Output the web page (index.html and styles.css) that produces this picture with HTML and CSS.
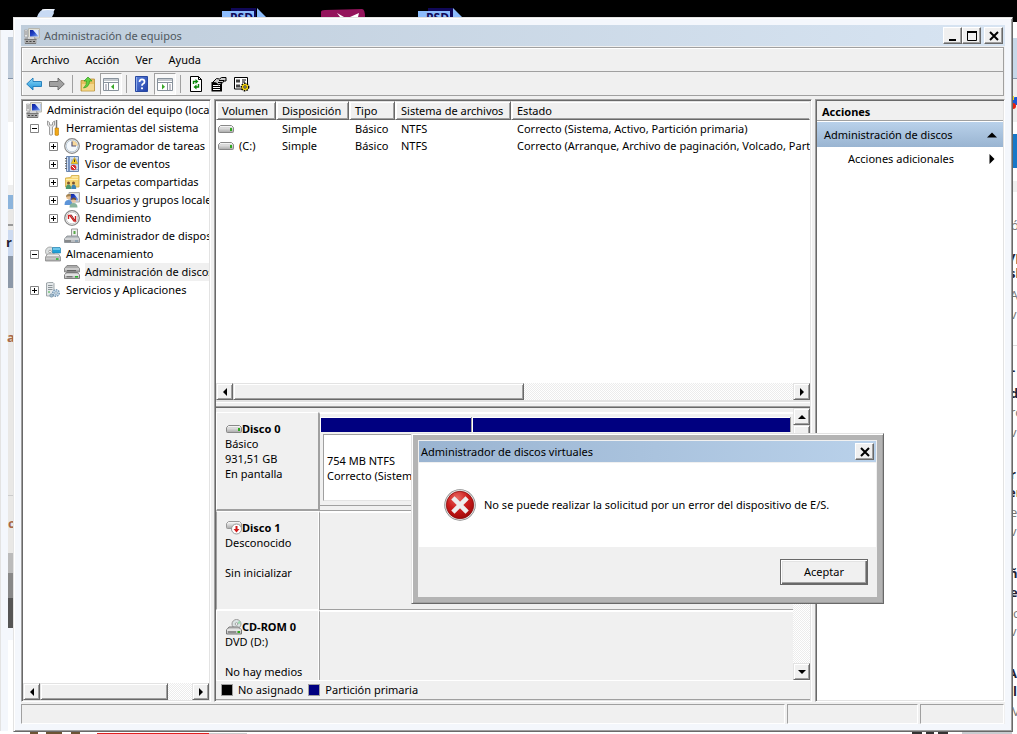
FILE: index.html
```html
<!DOCTYPE html>
<html lang="es">
<head>
<meta charset="utf-8">
<title>Administración de equipos</title>
<link rel="stylesheet" href="styles.css">
</head>
<body>
<svg class="defs" aria-hidden="true">
  <defs>
    <linearGradient id="gBlue" x1="0" y1="0" x2="1" y2="1"><stop offset="0" stop-color="#0a1e9c"/><stop offset=".5" stop-color="#2446c8"/><stop offset="1" stop-color="#8fb4f4"/></linearGradient>
    <linearGradient id="gArrow" x1="0" y1="0" x2="0" y2="1"><stop offset="0" stop-color="#8fdcfa"/><stop offset="1" stop-color="#1c8fd6"/></linearGradient>
    <linearGradient id="gDrive" x1="0" y1="0" x2="0" y2="1"><stop offset="0" stop-color="#fff"/><stop offset="1" stop-color="#a8a8a8"/></linearGradient>
    <linearGradient id="gHelp" x1="0" y1="0" x2="1" y2="1"><stop offset="0" stop-color="#5c82dc"/><stop offset="1" stop-color="#1f3fa8"/></linearGradient>
    <radialGradient id="gErr" cx=".4" cy=".25" r=".8"><stop offset="0" stop-color="#e86a62"/><stop offset=".5" stop-color="#cc1c1c"/><stop offset="1" stop-color="#9c0808"/></radialGradient>
    <symbol id="computer" viewBox="0 0 16 16">
      <path d="M4.500.5h11v9.500h-11z" fill="#e0e0d8" stroke="#b8b8b0"/>
      <path d="M6 2h8.500v6.500H6z" fill="url(#gBlue)"/><path d="M9 2h5.500v6.500z" fill="#dce8fc"/>
      <path d="M.5 2h3v7h-3z" fill="#e4e4e4" stroke="#999" stroke-width=".6"/><path d="M1 4h2M1 6h2" stroke="#888"/>
      <path d="M.5 10l3-1h7l2 2v4.500H.5z" fill="#a8a8a8"/><path d="M.5 11.500h12" stroke="#777"/><path d="M1 15.500h11" stroke="#777"/><path d="M2 13.500h2M5.500 13.500h2M9 13.500h2" stroke="#444"/><path d="M4 10h6" stroke="#fff"/>
    </symbol>
    <symbol id="tools" viewBox="0 0 16 16">
      <path d="M2.500 1v4l2 2v7.500q1.500 1.500 3 0V7l2-2V1L7.500 2.500V5h-3V2.500z" fill="#e8e8e8" stroke="#888" stroke-width=".8"/>
      <path d="M11.500 0v8" stroke="#777" stroke-width="1.500"/><path d="M10 8h3.500v7q-1.700 1-3.500 0z" fill="#f0a818" stroke="#b87808" stroke-width=".6"/>
    </symbol>
    <symbol id="clock" viewBox="0 0 16 16">
      <circle cx="8" cy="8" r="7.300" fill="#f4f8fc" stroke="#888" stroke-width="1.200"/><circle cx="8" cy="8" r="5.800" fill="none" stroke="#bccbd8"/>
      <path d="M8 8V2.500A5.500 5.500 0 0 1 13.500 8z" fill="#f8d89c"/><path d="M8 3.500V8h4" fill="none" stroke="#557" stroke-width="1.200"/>
    </symbol>
    <symbol id="events" viewBox="0 0 16 16">
      <path d="M2.500.5h12v15h-12z" fill="#ccdcf2" stroke="#6a86b0"/><path d="M4 1h2v14H4z" fill="#7894c0"/>
      <path d="M1 2.500h2M1 5h2M1 7.500h2M1 10h2M1 12.500h2" stroke="#666"/><path d="M7 4h7M7 6h7M7 8h7M7 13.500h7" stroke="#94acd0"/>
      <path d="M10.500 1.500l3.200 6H7.200z" fill="#f8cc20" stroke="#c09810" stroke-width=".6"/><path d="M10.500 3.500v2.500" stroke="#333"/><circle cx="9.500" cy="11.500" r="2.800" fill="#d83030"/><path d="M8 10l3 3" stroke="#fff"/>
    </symbol>
    <symbol id="shared" viewBox="0 0 16 16">
      <path d="M1.500 4l5-.5 1-2h7.500V13H1.500z" fill="#f6d674" stroke="#d0a840" stroke-width=".8"/><path d="M8 3h6" stroke="#fff4c4"/><path d="M2 5.500h12" stroke="#fff0b0"/>
      <circle cx="4.500" cy="9" r="1.500" fill="#7c5430"/><path d="M1.800 15q0-4.500 2.700-4.500T7.200 15z" fill="#4c9870"/><circle cx="9.500" cy="9" r="1.500" fill="#7c5430"/><path d="M7.200 15q0-4.500 2.500-4.500t2.500 4.500z" fill="#3e84b4"/>
    </symbol>
    <symbol id="users" viewBox="0 0 16 16">
      <path d="M5 .5h10.500V10H5z" fill="#ddd" stroke="#aaa"/><path d="M6.500 2H14v6.500H6.500z" fill="url(#gBlue)"/><path d="M10 2h4v5z" fill="#dce8fc"/>
      <circle cx="4.500" cy="5" r="2.300" fill="#e8c090"/><path d="M2 5q0-3 3-3t2 2.500q-3-.5-5 .5z" fill="#a08050"/><path d="M.5 13q0-5 4-5t4 5z" fill="#5c94d8"/>
      <circle cx="9.500" cy="8.500" r="2.300" fill="#e8c4a0"/><path d="M7 8q.5-3 3-2.500t2 2.500q-3-1-5 0z" fill="#705030"/><path d="M5.500 15.500q0-4.500 4-4.500t4 4.500z" fill="#88b49c"/>
    </symbol>
    <symbol id="perf" viewBox="0 0 16 16">
      <circle cx="8" cy="8" r="7.300" fill="#fff" stroke="#888" stroke-width="1.300"/><circle cx="8" cy="8" r="5.800" fill="none" stroke="#ccc"/>
      <path d="M4.500 9V5.500h1.500l4 5.500h1.500V6" fill="none" stroke="#d02020" stroke-width="1.400"/><path d="M7 4.500l4 6" stroke="#802020"/>
    </symbol>
    <symbol id="device" viewBox="0 0 16 16">
      <path d="M7.500 1h6v8h-6z" fill="#eee" stroke="#999"/><path d="M9.500 3h2v3h-2z" fill="#58a848"/>
      <path d="M3 8h11l1.500 3v3.500H.5V11z" fill="#b8bcc0" stroke="#80858a" stroke-width=".8"/><path d="M1 11h14" stroke="#eee"/><path d="M1 13h6" stroke="#555"/><path d="M11 13h3" stroke="#6084a0"/>
    </symbol>
    <symbol id="storage" viewBox="0 0 16 16">
      <circle cx="5" cy="5.500" r="4.500" fill="#dce0e0" stroke="#999" stroke-width=".8"/><circle cx="5" cy="5.500" r="1.300" fill="#fff" stroke="#777" stroke-width=".6"/>
      <path d="M7.500 1.500H15l.5 1v4.500h-8z" fill="#20a0d8" stroke="#1878a8" stroke-width=".6"/><path d="M8 3h7" stroke="#b8ecfc"/>
      <path d="M2.500 8h11l2 3v4H.5v-4z" fill="url(#gDrive)" stroke="#888" stroke-width=".8"/><path d="M1 11h14" stroke="#999"/><path d="M11 12.200h2.500v1.600H11z" fill="#2cb830"/>
    </symbol>
    <symbol id="diskmgmt" viewBox="0 0 16 16">
      <path d="M3 1.500h10l2.500 3v3.500H.5V4.500z" fill="#aaa" stroke="#777" stroke-width=".8"/><path d="M1 5h14" stroke="#eee"/><path d="M3 6.700h9" stroke="#555"/>
      <path d="M2.500 8.500h11l2 2.500v3.500H.5V11z" fill="#c4c4c4" stroke="#666" stroke-width=".8"/><path d="M1 11h14" stroke="#fff"/><path d="M2.500 12.800h6" stroke="#555"/><path d="M11 12h3v1.600h-3z" fill="#28b02c"/>
    </symbol>
    <symbol id="services" viewBox="0 0 16 16">
      <path d="M1.500 1l2-.5H8l1 1V14H1.500z" fill="#e4e8ea" stroke="#8c9498" stroke-width=".8"/><path d="M3 3.500h4.500M3 5.500h4.500M3 7.500h4.500" stroke="#8c9498"/><path d="M3 10h2" stroke="#3cb040"/>
      <circle cx="11" cy="11" r="3.300" fill="#c8dcec" stroke="#7898b4" stroke-dasharray="1.500 1" stroke-width="1.400"/><circle cx="11" cy="11" r="1.300" fill="#fff" stroke="#6888a0" stroke-width=".7"/><circle cx="6.500" cy="13.500" r="1.700" fill="#a4bccc" stroke="#6888a0" stroke-width=".6"/>
    </symbol>
    <symbol id="drive" viewBox="0 0 16 16">
      <path d="M2.500 4.500h11l2 2v4q0 1-1 1h-13q-1 0-1-1v-4z" fill="url(#gDrive)" stroke="#888"/><path d="M1 6.500h14" stroke="#d8d8d8"/><path d="M12 7h2v3h-2z" fill="#30a820"/>
    </symbol>
    <symbol id="driveDown" viewBox="0 0 16 16">
      <path d="M2.500 1.500h11l2 2v4q0 1-1 1h-13q-1 0-1-1v-4z" fill="url(#gDrive)" stroke="#999"/><circle cx="10.500" cy="9" r="5" fill="#fff" stroke="#999"/>
      <path d="M9.500 6h2v3h2l-3 3.500-3-3.500h2z" fill="#d01818"/>
    </symbol>
    <symbol id="cdrom" viewBox="0 0 16 16">
      <circle cx="10.500" cy="5" r="4.500" fill="#dce4e4" stroke="#999"/><path d="M10.500 5l3-3.500 1.500 3z" fill="#9cd8b0"/><circle cx="10.500" cy="5" r="1.300" fill="#fff" stroke="#888" stroke-width=".7"/>
      <path d="M3 8h9.500l3 3v4H.5v-4z" fill="#c8c8c8" stroke="#777"/><path d="M1 11h14" stroke="#fff"/><path d="M2 13h8" stroke="#555"/><path d="M11.500 12h2.500v2h-2.500z" fill="#30a820"/>
    </symbol>
    <symbol id="back" viewBox="0 0 16 16"><path d="M.7 8L7 2v3.500h8.500v5H7V14z" fill="url(#gArrow)" stroke="#1c78b8" stroke-width=".9"/></symbol>
    <symbol id="forward" viewBox="0 0 16 16"><path d="M15.300 8L9 2v3.500H.5v5H9V14z" fill="#a0a0a0" stroke="#666" stroke-width=".9"/></symbol>
    <symbol id="up" viewBox="0 0 16 16"><path d="M1 4.500h5l1-1.500h7.500v12H1z" fill="#e8c060" stroke="#b89038" stroke-width=".8"/><path d="M2 8h12v6.500H2z" fill="#f4d88c"/><path d="M3.500 12q3.500-3 3-7H4L8 1l4 4H9.500q0 6-6 7z" fill="#64d040" stroke="#2c9c1c" stroke-width=".7"/></symbol>
    <symbol id="panelLeft" viewBox="0 0 16 16"><path d="M.5 2.500h15v12H.5z" fill="#fff" stroke="#88929c"/><path d="M1 4h14M1 6.500h14" stroke="#88929c"/><path d="M5.500 7v7" stroke="#88929c"/><path d="M2 9h2M2 11h2M2 13h2" stroke="#889"/><path d="M11 8v5.500L8 10.700z" fill="#38a828"/></symbol>
    <symbol id="panelRight" viewBox="0 0 16 16"><path d="M.5 2.500h15v12H.5z" fill="#fff" stroke="#88929c"/><path d="M1 4h14M1 6.500h14" stroke="#88929c"/><path d="M10.500 7v7" stroke="#88929c"/><path d="M12 9h2M12 11h2M12 13h2" stroke="#889"/><path d="M5 8v5.500l3-2.800z" fill="#38a828"/></symbol>
    <symbol id="help" viewBox="0 0 16 16"><path d="M1.500.5h12v15h-12z" fill="url(#gHelp)" stroke="#2848a0"/><path d="M2.500 1v14" stroke="#90acec"/><path d="M5.500 6q0-2.700 2.500-2.700t2.500 2.400q0 1.500-1.300 2T8 9.800" fill="none" stroke="#fff" stroke-width="1.700"/><circle cx="8" cy="12.300" r="1.100" fill="#fff"/></symbol>
    <symbol id="refresh" viewBox="0 0 16 16"><path d="M2.500.5h8l3 3v12h-11z" fill="#fff" stroke="#000"/><path d="M10.500.5v3h3" fill="none" stroke="#000"/><path d="M5.500 8V5.500H8" fill="none" stroke="#088808" stroke-width="1.400"/><path d="M7.500 3v5l3-2.500z" fill="#088808"/><path d="M10.500 8v3H8" fill="none" stroke="#088808" stroke-width="1.400"/><path d="M8.500 8.500v5l-3-2.500z" fill="#088808"/></symbol>
    <symbol id="props" viewBox="0 0 16 16"><path d="M.5 6h10.500v9.500H.5z" fill="#000"/><path d="M2 9.500h7M2 11.500h7M2 13.500h7" stroke="#fff"/><path d="M1.500 6.500l4-4 3 .5 2-1.500h4.500v3.500h-2L11 7.500 7 9 5.500 7z" fill="#ccc" stroke="#000"/><path d="M8 4.500h5M7 6.500h4" stroke="#000"/></symbol>
    <symbol id="settings" viewBox="0 0 16 16"><path d="M.5 1.500h13v11.500H.5z" fill="#fff" stroke="#000"/><path d="M2 3.500h4v3H2zM2 8.500h4v3H2z" fill="#444"/><path d="M8 4h4M8 6h3" stroke="#000"/><circle cx="11" cy="11" r="3.600" fill="#f0d010" stroke="#000" stroke-width="1.600" stroke-dasharray="1.600 1"/><circle cx="11" cy="11" r="3" fill="#f0d010"/><circle cx="11" cy="11" r="1.200" fill="#fff" stroke="#000" stroke-width=".8"/></symbol>
    <symbol id="error" viewBox="0 0 32 32"><circle cx="16" cy="16" r="15.700" fill="#848484"/><circle cx="16" cy="16" r="14.900" fill="#e8e8e8"/><circle cx="16" cy="16" r="13.700" fill="url(#gErr)" stroke="#8c1010" stroke-width=".8"/><path d="M10.500 10.500l11 11M21.500 10.500l-11 11" stroke="#eee" stroke-width="4.600" stroke-linecap="square"/></symbol>
    <symbol id="close" viewBox="0 0 10 10"><path d="M1 1l8 8M9 1L1 9" stroke="#000" stroke-width="2"/></symbol>
    <symbol id="plus" viewBox="0 0 9 9"><path d="M.5.5h8v8h-8z" fill="#fff" stroke="#848484"/><path d="M2 4.500h5M4.500 2v5" stroke="#000"/></symbol>
    <symbol id="minus" viewBox="0 0 9 9"><path d="M.5.5h8v8h-8z" fill="#fff" stroke="#848484"/><path d="M2 4.500h5" stroke="#000"/></symbol>
    <symbol id="triL" viewBox="0 0 8 8"><path d="M6 0v8L2 4z"/></symbol>
    <symbol id="triR" viewBox="0 0 8 8"><path d="M2 0v8l4-4z"/></symbol>
    <symbol id="triU" viewBox="0 0 8 8"><path d="M0 6h8L4 2z"/></symbol>
    <symbol id="triD" viewBox="0 0 8 8"><path d="M0 2h8L4 6z"/></symbol>
  </defs>
</svg>

<div class="desktop">
  <svg class="shortcuts" width="480" height="17" aria-hidden="true">
    <path d="M37 17q3-8 8-8h10q-2 3-1 4l-2 4z" fill="#c8daf4"/><path d="M42 10q6-1 12 0" stroke="#fff" fill="none"/>
    <g><path d="M231 8h25v9h-25z" fill="#100858"/><path d="M222 11h32v6h-32z" fill="#8cbcfc"/><path d="M257 8l9 9h-9z" fill="#8cbcfc"/><text x="230" y="22" class="psd">PSD</text></g>
    <path d="M321 12q0-2 4-2l37-1q3 0 3 8h-44z" fill="#94145c"/><path d="M337 13l7 4h-4zM350 17l9-4-1 4z" fill="#fff"/>
    <g><path d="M428 8h25v9h-25z" fill="#100858"/><path d="M418 11h32v6h-32z" fill="#8cbcfc"/><path d="M453 8l9 9h-9z" fill="#8cbcfc"/><text x="426" y="22" class="psd">PSD</text></g>
  </svg>
  <div class="behind" aria-hidden="true">
    <svg class="behind-left" width="13" height="704">
      <path d="M0 0h13v704H0z" fill="#f4f7fc"/><path d="M0 0h1v704H0z" fill="#e3e3e3"/><path d="M8 7h5v41H8z" fill="#c1cddb"/><path d="M8 48h5v117H8z" fill="#efefef"/><path d="M8 48h5v1H8z" fill="#8494a8"/><path d="M8 92h5v63H8z" fill="#fff"/>
      <path d="M8 165h5v14H8z" fill="#8cb4dc"/><path d="M8 179h5v416H8z" fill="#e9e8e6"/><path d="M8 194h5v2H8z" fill="#999"/><path d="M8 200h5v26H8z" fill="#ccdaf0"/><path d="M8 226h5v32H8z" fill="#8c98a8"/>
      <text x="6" y="217" class="frag bold">r</text><text x="7" y="312" class="frag rust">a</text><path d="M8 465h5v1H8z" fill="#ccc"/><text x="8" y="498" class="frag rust">c</text>
      <path d="M8 523h5v20H8z" fill="#bbb"/><path d="M8 543h5v25H8z" fill="#888"/><path d="M8 568h5v30H8z" fill="#555"/><path d="M8 610h5v94H8z" fill="#fff"/>
    </svg>
    <svg class="behind-right" width="5" height="712">
      <path d="M0 0h5v712H0z" fill="#fff"/><path d="M0 16h5v40H0z" fill="#c8d8e8"/><path d="M0 56h5v44H0z" fill="#efefef"/><path d="M0 56h5v1H0z" fill="#8494a8"/><circle cx="4" cy="79" r="4" fill="#1858d8"/><circle cx="1" cy="84" r="3" fill="#e82010"/><path d="M0 74h2v4H0z" fill="#f0e020"/>
      <path d="M1 112h4v34H1z" fill="#1878c8"/><path d="M0 159h5v11H0z" fill="#efefef"/><path d="M0 323h5v1H0z" fill="#ddd"/>
      <g class="frag"><text x="-1" y="208">ó</text><text x="-4" y="239" class="bold">yp</text><text x="-3" y="256" class="bold">sl</text><text x="-2" y="278">A</text><text x="-2" y="297">v</text><text x="-1" y="353" class="bold">-</text><text x="-2" y="376" class="bold">d</text><text x="-2" y="395">ro</text><text x="-2" y="415">v</text><text x="-2" y="457" class="bold">r</text><text x="-4" y="475" class="bold">er</text><text x="-2" y="495">e</text><text x="-2" y="514">v</text><text x="-3" y="556" class="bold">ñ</text><text x="-2" y="575" class="bold">e</text><text x="1" y="596">c</text><text x="-2" y="614">v</text><text x="-4" y="656" class="bold">A</text><text x="1" y="674" class="bold">l</text><text x="0" y="694">V</text></g>
    </svg>
    <svg class="behind-bottom" width="1017" height="3"><path d="M0 0h1017v3H0z" fill="#fff"/><path d="M30 1h8v2h-8zM46 1h16v2H46zM71 1h9v2h-9z" fill="#6c5434"/><path d="M97 2h112v1H97z" fill="#e02020"/><path d="M209 2h38v1h-38z" fill="#ccc"/><path d="M912 1h10v2h-10zM926 1h8v2h-8zM938 1h10v2h-10z" fill="#333"/><path d="M962 1h50v2h-50z" fill="#c8ccd0"/></svg>
  </div>

  <main class="window">
    <header class="titlebar">
      <svg class="icon"><use href="#computer"/></svg>
      <h1 class="title">Administración de equipos</h1>
      <div class="winbuttons">
        <button class="winbtn" aria-label="Minimizar"><svg width="10" height="10"><path d="M1 8h7v2H1z"/></svg></button>
        <button class="winbtn" aria-label="Maximizar"><svg width="10" height="10"><path d="M.5 1h9v8.500h-9z" fill="none" stroke="#000"/><path d="M0 0h10v2H0z"/></svg></button>
        <button class="winbtn winclose" aria-label="Cerrar"><svg width="10" height="10"><use href="#close"/></svg></button>
      </div>
    </header>
    <div class="bars">
      <nav class="menubar"><button>Archivo</button><button>Acción</button><button>Ver</button><button>Ayuda</button></nav>
      <div class="toolbar">
        <button aria-label="Atrás"><svg class="icon"><use href="#back"/></svg></button>
        <button aria-label="Adelante"><svg class="icon"><use href="#forward"/></svg></button>
        <span class="sep"></span>
        <button aria-label="Subir un nivel"><svg class="icon"><use href="#up"/></svg></button>
        <button class="pressed" aria-label="Mostrar árbol de consola"><svg class="icon"><use href="#panelLeft"/></svg></button>
        <span class="sep"></span>
        <button aria-label="Ayuda"><svg class="icon"><use href="#help"/></svg></button>
        <button class="pressed" aria-label="Mostrar panel de acciones"><svg class="icon"><use href="#panelRight"/></svg></button>
        <span class="sep"></span>
        <button aria-label="Actualizar"><svg class="icon"><use href="#refresh"/></svg></button>
        <button aria-label="Propiedades"><svg class="icon"><use href="#props"/></svg></button>
        <button aria-label="Configuración"><svg class="icon"><use href="#settings"/></svg></button>
      </div>
    </div>

    <div class="panes">
      <nav class="pane treepane">
        <ul class="tree">
          <li><div class="node root"><svg class="icon"><use href="#computer"/></svg><span>Administración del equipo (local)</span></div>
            <ul>
              <li><div class="node"><button class="exp" aria-label="Contraer"><svg><use href="#minus"/></svg></button><svg class="icon"><use href="#tools"/></svg><span>Herramientas del sistema</span></div>
                <ul class="sub">
                  <li class="node"><button class="exp" aria-label="Expandir"><svg><use href="#plus"/></svg></button><svg class="icon"><use href="#clock"/></svg><span>Programador de tareas</span></li>
                  <li class="node"><button class="exp" aria-label="Expandir"><svg><use href="#plus"/></svg></button><svg class="icon"><use href="#events"/></svg><span>Visor de eventos</span></li>
                  <li class="node"><button class="exp" aria-label="Expandir"><svg><use href="#plus"/></svg></button><svg class="icon"><use href="#shared"/></svg><span>Carpetas compartidas</span></li>
                  <li class="node"><button class="exp" aria-label="Expandir"><svg><use href="#plus"/></svg></button><svg class="icon"><use href="#users"/></svg><span>Usuarios y grupos locales</span></li>
                  <li class="node"><button class="exp" aria-label="Expandir"><svg><use href="#plus"/></svg></button><svg class="icon"><use href="#perf"/></svg><span>Rendimiento</span></li>
                  <li class="node leaf"><svg class="icon"><use href="#device"/></svg><span>Administrador de dispositivos</span></li>
                </ul>
              </li>
              <li><div class="node"><button class="exp" aria-label="Contraer"><svg><use href="#minus"/></svg></button><svg class="icon"><use href="#storage"/></svg><span>Almacenamiento</span></div>
                <ul class="sub"><li class="node leaf"><svg class="icon"><use href="#diskmgmt"/></svg><span class="selected">Administración de discos</span></li></ul>
              </li>
              <li><div class="node"><button class="exp" aria-label="Expandir"><svg><use href="#plus"/></svg></button><svg class="icon"><use href="#services"/></svg><span>Servicios y Aplicaciones</span></div></li>
            </ul>
          </li>
        </ul>
        <div class="scroll">
          <button class="sbtn" aria-label="Izquierda"><svg><use href="#triL"/></svg></button>
          <div class="track"><div class="thumb thumb-tree"></div></div>
          <button class="sbtn" aria-label="Derecha"><svg><use href="#triR"/></svg></button>
        </div>
      </nav>

      <section class="pane diskpane">
        <div class="volumes">
          <div class="tablewrap">
            <table>
              <colgroup><col class="c1"><col class="c2"><col class="c3"><col class="c4"><col></colgroup>
              <thead><tr><th>Volumen</th><th>Disposición</th><th>Tipo</th><th>Sistema de archivos</th><th>Estado</th></tr></thead>
              <tbody>
                <tr><td class="vol"><svg class="icon"><use href="#drive"/></svg></td><td>Simple</td><td>Básico</td><td>NTFS</td><td>Correcto (Sistema, Activo, Partición primaria)</td></tr>
                <tr><td class="vol"><svg class="icon"><use href="#drive"/></svg>(C:)</td><td>Simple</td><td>Básico</td><td>NTFS</td><td>Correcto (Arranque, Archivo de paginación, Volcado, Partición primaria)</td></tr>
              </tbody>
            </table>
          </div>
          <div class="scroll">
            <button class="sbtn" aria-label="Izquierda"><svg><use href="#triL"/></svg></button>
            <div class="track"><div class="thumb thumb-list"></div></div>
            <button class="sbtn" aria-label="Derecha"><svg><use href="#triR"/></svg></button>
          </div>
        </div>
        <div class="splitter"></div>
        <div class="lower">
          <div class="diskview">
            <div class="disks">
              <article class="disk">
                <div class="label raised"><h2><svg class="icon"><use href="#drive"/></svg>Disco 0</h2><p>Básico</p><p>931,51 GB</p><p>En pantalla</p></div>
                <div class="graph parts">
                  <div class="part part-sys"><div class="stripe"></div><div class="volbox"><p>754 MB NTFS</p><p>Correcto (Sistema, Activo)</p></div></div>
                  <div class="part part-main"><div class="stripe"></div><div class="volbox"></div></div>
                </div>
              </article>
              <article class="disk">
                <div class="label sunken"><h2><svg class="icon"><use href="#driveDown"/></svg>Disco 1</h2><p>Desconocido</p><p class="last">Sin inicializar</p></div>
                <div class="graph"></div>
              </article>
              <article class="disk">
                <div class="label"><h2><svg class="icon"><use href="#cdrom"/></svg>CD-ROM 0</h2><p>DVD (D:)</p><p class="last">No hay medios</p></div>
                <div class="graph"></div>
              </article>
            </div>
            <div class="scroll vertical">
              <button class="sbtn" aria-label="Arriba"><svg><use href="#triU"/></svg></button>
              <div class="track"><div class="thumb thumb-disks"></div></div>
              <button class="sbtn" aria-label="Abajo"><svg><use href="#triD"/></svg></button>
            </div>
          </div>
          <div class="legend"><span class="key black"></span><span>No asignado</span><span class="key navy"></span><span>Partición primaria</span></div>
        </div>
      </section>

      <aside class="pane actions">
        <h2>Acciones</h2>
        <button class="group">Administración de discos<svg><use href="#triU"/></svg></button>
        <button class="more">Acciones adicionales<svg><use href="#triR"/></svg></button>
      </aside>
    </div>
    <footer class="status"><div></div><div class="s2"></div><div class="s3"></div></footer>
  </main>

  <div class="dialog" role="dialog" aria-labelledby="dlg-title">
    <div class="dlg-title"><h2 id="dlg-title">Administrador de discos virtuales</h2><button class="winbtn" aria-label="Cerrar"><svg width="10" height="10"><use href="#close"/></svg></button></div>
    <div class="dlg-body"><svg class="erricon"><use href="#error"/></svg><p>No se puede realizar la solicitud por un error del dispositivo de E/S.</p></div>
    <div class="dlg-foot"><button class="ok">Aceptar</button></div>
  </div>
</div>
</body>
</html>
```
FILE: styles.css
```css
* { box-sizing: border-box; }
html, body { height: 100%; margin: 0; }
body, button { font-family: "Noto Sans", "Open Sans", sans-serif; font-size: 11px; line-height: 15px; color: #000; }
h1, h2, p, ul { margin: 0; padding: 0; font-size: 11px; }
ul { list-style: none; }
button { margin: 0; padding: 0; border: 0; background: none; }
svg { display: block; flex: none; }
.icon { width: 16px; height: 16px; }
.defs { position: absolute; width: 0; height: 0; }

.desktop { position: relative; height: 100%; overflow: hidden; background: #000; }
.shortcuts { position: absolute; left: 0; top: 0; }
.psd { font: bold 12px "Open Sans", sans-serif; fill: #100858; }
.behind-left { position: absolute; left: 0; top: 30px; }
.behind-right { position: absolute; right: 0; top: 22px; }
.behind-bottom { position: absolute; left: 0; bottom: 0; }
.frag { font: 13px "Open Sans", sans-serif; fill: #777; }
.frag .bold, .frag.bold { font-weight: bold; fill: #223; }
.frag.rust { font-weight: bold; fill: #a86848; }

/* Main window */
.window { position: absolute; inset: 17px 4px 2px 13px; display: flex; flex-direction: column; padding: 7px; background: #f0f0f0; border: 1px solid; border-color: #e3e3e3 #696969 #696969 #e3e3e3; box-shadow: inset 1px 1px #fff, inset -1px -1px #a0a0a0, inset 0 0 0 7px #f4f7fc; }
.titlebar { display: flex; align-items: center; flex: none; height: 21px; margin-bottom: 1px; padding: 0 2px 0 3px; background: linear-gradient(90deg, #bfcddb, #d7e4f2); }
.title { flex: 1; margin-left: 4px; font-weight: normal; color: #505860; }
.winbuttons { display: flex; }
.winbtn { display: grid; place-items: center; width: 19px; height: 17px; background: #f0f0f0; border: 1px solid; border-color: #fff #696969 #696969 #fff; box-shadow: inset -1px -1px #a0a0a0; }
.winclose { margin-left: 3px; }
.bars { flex: none; margin-right: 1px; border: 1px solid #a0a0a0; box-shadow: inset 1px 1px #fff; }
.menubar { display: flex; align-items: center; gap: 16px; height: 24px; padding-left: 9px; border-bottom: 1px solid #a0a0a0; }
.toolbar { display: flex; align-items: center; gap: 1px; height: 23px; padding-left: 1px; }
.toolbar button { display: grid; place-items: center; width: 22px; height: 22px; }
.toolbar .pressed { background: #f8f8f8; border: 1px solid; border-color: #a0a0a0 #fff #fff #a0a0a0; }
.sep { width: 1px; height: 18px; margin: 0 3px; background: #a0a0a0; }

.panes { flex: 1; min-height: 0; display: grid; grid-template-columns: 190px minmax(0, 1fr) 190px; gap: 3px; margin: 3px 0 2px; }
.pane { display: flex; flex-direction: column; min-width: 0; min-height: 0; overflow: hidden; padding: 1px; background: #fff; border: 1px solid; border-color: #a0a0a0 #fff #fff #a0a0a0; box-shadow: inset 1px 1px #696969, inset -1px -1px #e3e3e3; }

/* Console tree */
.tree { flex: 1; min-height: 0; overflow: hidden; white-space: nowrap; }
.node { display: flex; align-items: center; height: 18px; padding-left: 7px; }
.node.root { padding-left: 3px; }
.node .icon { margin-right: 5px; }
.node span { height: 18px; line-height: 17px; }
.sub .node { padding-left: 26px; }
.sub .leaf { padding-left: 41px; }
.exp { margin-right: 6px; }
.exp svg { width: 9px; height: 9px; }
.selected { background: #f0f0f0; }

/* Scroll bars */
.scroll { display: flex; flex: none; height: 17px; }
.track { flex: 1; background: repeating-conic-gradient(#fff 0 25%, #ececec 0 50%) 0 0 / 2px 2px; }
.sbtn, .thumb { background: #f0f0f0; border: 1px solid; border-color: #e3e3e3 #696969 #696969 #e3e3e3; box-shadow: inset 1px 1px #fff, inset -1px -1px #a0a0a0; }
.sbtn { display: grid; place-items: center; width: 17px; height: 17px; }
.sbtn svg { width: 8px; height: 8px; }
.thumb { height: 100%; }
.thumb-tree { width: 84%; }
.thumb-list { width: 52%; }
.vertical { flex-direction: column; width: 17px; height: auto; }
.thumb-disks { height: 70%; }

/* Volume list */
.diskpane { display: grid; grid-template-columns: minmax(0, 1fr); grid-template-rows: minmax(0, 299fr) 8px minmax(0, 292fr); }
.volumes { display: flex; flex-direction: column; min-height: 0; }
.tablewrap { flex: 1; min-height: 0; overflow: hidden; }
table { width: 100%; table-layout: fixed; border-collapse: separate; border-spacing: 0; }
.c1 { width: 60px; } .c2 { width: 73px; } .c3 { width: 46px; } .c4 { width: 116px; }
th { height: 19px; padding: 0 0 0 5px; text-align: left; font-weight: normal; white-space: nowrap; overflow: hidden; background: #f0f0f0; border: 1px solid; border-color: #e3e3e3 #696969 #696969 #fff; box-shadow: inset 1px 1px #fff, inset -1px -1px #a0a0a0; }
th:last-child { border-right-color: #f0f0f0; box-shadow: inset 1px 1px #fff, inset 0 -1px #a0a0a0; }
td { height: 17px; padding: 0 0 0 6px; white-space: nowrap; overflow: hidden; }
td.vol { display: flex; align-items: center; gap: 5px; padding-left: 2px; }
.splitter { background: #f0f0f0; border-bottom: 1px solid #696969; box-shadow: inset 0 2px #e3e3e3, inset 0 3px #fff, inset 0 -1px #a0a0a0; }

/* Disk map */
.lower { display: flex; flex-direction: column; min-height: 0; background: #f0f0f0; }
.diskview { flex: 1; min-height: 0; display: flex; }
.disks { flex: 1; min-width: 0; overflow: hidden; padding-top: 4px; }
.disk { display: flex; height: 99px; }
.label { width: 103px; padding: 8px 0 0 8px; border: 1px solid #fff; white-space: nowrap; }
.label.raised { border-right-color: #a0a0a0; border-bottom: 2px solid #a0a0a0; }
.label.sunken { border-left-color: #a0a0a0; }
.label h2 { display: flex; align-items: center; height: 15px; padding-left: 1px; font-weight: bold; }
.label .last { margin-top: 15px; }
.graph { flex: 1; min-width: 0; border-left: 1px solid #a0a0a0; border-top: 2px solid #fff; border-bottom: 1px solid #a0a0a0; }
.parts { display: flex; padding: 3px 2px 4px 0; }
.part { display: flex; flex-direction: column; min-width: 0; border-bottom: 1px solid #a0a0a0; }
.part-sys { flex: 152; }
.part-main { flex: 319; }
.stripe { flex: none; height: 15px; background: #000080; border: solid #fff; border-width: 1px 0 0 1px; box-shadow: 1px 0 #a0a0a0; margin-right: 1px; }
.volbox { flex: 1; min-height: 0; margin: 2px 3px 4px; padding: 18px 0 0 3px; overflow: hidden; white-space: nowrap; background: #fff; border: 1px solid; border-color: #a0a0a0 #e3e3e3 #e3e3e3 #a0a0a0; }
.legend { display: flex; align-items: center; gap: 5px; flex: none; height: 20px; padding: 0 0 1px 5px; border-top: 1px solid #fff; border-bottom: 1px solid #a0a0a0; }
.key { width: 12px; height: 12px; border: 1px solid #a0a0a0; }
.black { background: #000; }
.navy { background: #000080; }

/* Actions */
.actions h2 { flex: none; height: 20px; padding: 3px 5px 0; background: #f0f0f0; border-bottom: 1px solid #a0a0a0; }
.actions button { display: flex; align-items: center; justify-content: space-between; flex: none; height: 25px; padding: 0 6px 0 7px; text-align: left; }
.actions svg { width: 10px; height: 10px; }
.actions .group { margin-top: 1px; background: linear-gradient(#b9d1ea, #99b4d1); }
.actions .more { height: 23px; padding-left: 31px; }

.status { display: flex; flex: none; gap: 2px; height: 20px; margin-right: 1px; }
.status div { flex: 1; border: 1px solid; border-color: #a0a0a0 #fff #fff #a0a0a0; }
.status .s2 { flex: 0 0 131px; }
.status .s3 { flex: 0 0 84px; }

/* Error dialog */
.dialog { position: absolute; left: 411px; top: 433px; width: 473px; padding: 6px; background: #b4b4b4; border: 1px solid; border-color: #e3e3e3 #696969 #696969 #e3e3e3; box-shadow: inset 1px 1px #fff, inset -1px -1px #a0a0a0; }
.dlg-title { display: flex; align-items: center; justify-content: space-between; height: 23px; padding: 0 2px; border: 1px solid #f0f0f0; background: linear-gradient(90deg, #9ab4d1, #b9d1ea); }
.dlg-title h2 { font-weight: normal; }
.dlg-body { display: flex; align-items: center; gap: 8px; height: 84px; padding: 0 0 1px 25px; background: #fff; border: solid #f0f0f0; border-width: 0 1px; }
.erricon { width: 32px; height: 32px; }
.dlg-foot { display: flex; justify-content: flex-end; padding: 12px 9px 12px; background: #f0f0f0; }
.ok { width: 88px; height: 26px; padding-bottom: 2px; background: #f0f0f0; border: 1px solid #696969; box-shadow: inset 1px 1px #fff, inset -1px -1px #696969, inset -2px -2px #a0a0a0, inset 2px 2px #e3e3e3; }
```
